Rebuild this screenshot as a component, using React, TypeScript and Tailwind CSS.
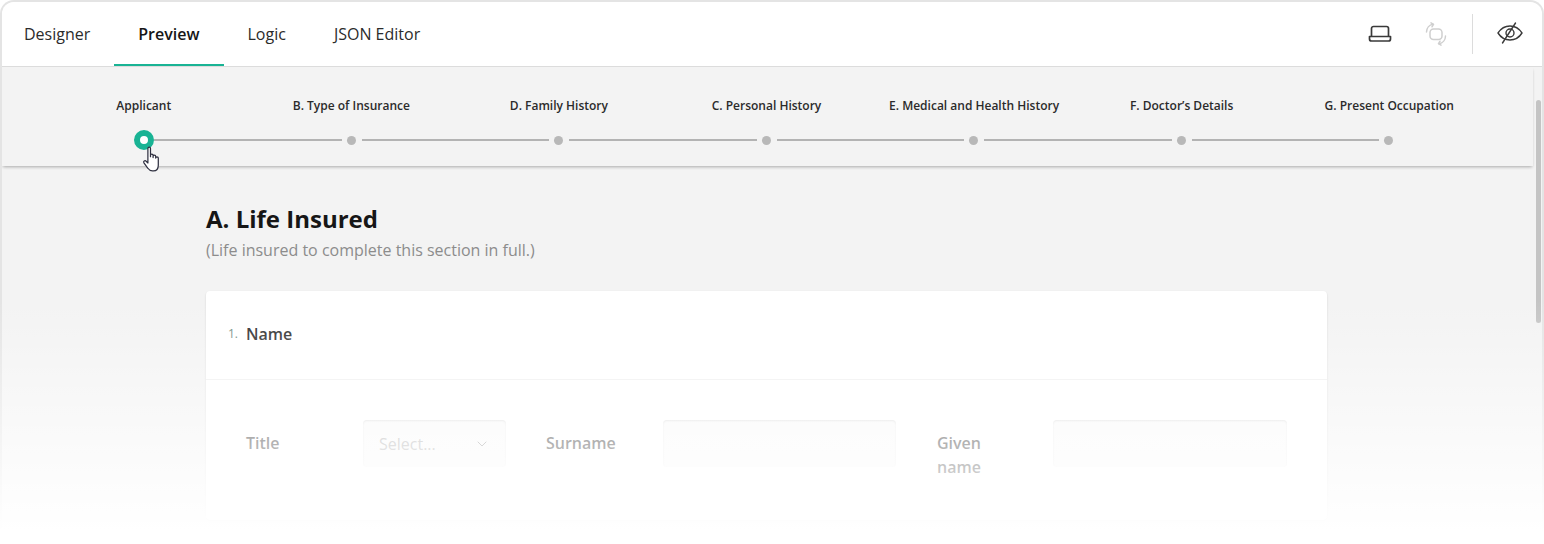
import { ChevronDown } from "lucide-react";

const tabs = ["Designer", "Preview", "Logic", "JSON Editor"];
const steps = [
  "Applicant",
  "B. Type of Insurance",
  "D. Family History",
  "C. Personal History",
  "E. Medical and Health History",
  "F. Doctor’s Details",
  "G. Present Occupation",
];

function LaptopIcon() {
  return (
    <svg width="24" height="24" viewBox="0 0 24 24" fill="none" stroke="#3a3a3a" strokeWidth="1.7" strokeLinejoin="round">
      <path d="M3.500 14.500V6.500A2 2 0 0 1 5.500 4.500h13a2 2 0 0 1 2 2v8" />
      <path d="M1.500 14.500h21V17a2 2 0 0 1-2 2H3.500a2 2 0 0 1-2-2z" />
    </svg>
  );
}

function RotateIcon() {
  return (
    <svg width="24" height="24" viewBox="0 0 24 24" fill="none" stroke="#cfcfcf" strokeWidth="1.5" strokeLinecap="round" strokeLinejoin="round">
      <rect x="6" y="7" width="12" height="10.500" rx="3.500" />
      <path d="M2.500 10A8 8 0 0 1 9 2.200" />
      <path d="M7 .8l2.500 1.500L8 4.800" />
      <path d="M21.500 14A8 8 0 0 1 15 21.800" />
      <path d="M17 23.200l-2.500-1.500L16 19.200" />
    </svg>
  );
}

function EyeOffIcon() {
  return (
    <svg width="26" height="26" viewBox="0 0 26 26" fill="none" stroke="#3a3a3a" strokeWidth="1.4" strokeLinecap="round" strokeLinejoin="round">
      <path d="M1 13c3-4.700 7-7 12-7s9 2.300 12 7c-3 4.700-7 7-12 7S4 17.700 1 13z" />
      <circle cx="13" cy="13" r="4" />
      <path d="M18.500 3L5.500 23" />
    </svg>
  );
}

function HandCursor() {
  return (
    <svg width="18" height="26" viewBox="0 0 15.500 23" fill="#fff" stroke="#2f3040" strokeWidth="1.1" strokeLinejoin="round">
      <path d="M5 2.200c0-1.500 2.300-1.500 2.300 0v7.300V8.200c0-1.400 2.300-1.400 2.300 0v2-1c0-1.400 2.300-1.400 2.300 0v1.500c0-1.300 2.300-1.300 2.300 0v6.300c0 3-1.600 5-4.300 5H9c-2 0-3-.8-4-2.300L1.500 15c-.9-1.400.9-2.700 2-1.500L5 15z" />
    </svg>
  );
}

function Field({
  label,
  labelClassName,
  children,
  className,
}: {
  label: string;
  labelClassName: string;
  children: React.ReactNode;
  className: string;
}) {
  return (
    <div className={`flex ${className}`}>
      <span className={`shrink-0 pt-[11px] pr-[40px] text-base leading-6 font-semibold text-[#383838] ${labelClassName}`}>{label}</span>
      {children}
    </div>
  );
}

export default function App() {
  return (
    <div className="relative h-[544px] w-[1544px] overflow-hidden bg-white font-['Open_Sans',sans-serif]">
      <div className="h-[544px] overflow-hidden rounded-t-[14px] border-2 border-b-0 border-[#e4e4e4] bg-[#f3f3f3]">
        {/* Tabs */}
        <header className="flex h-[65px] items-stretch justify-between border-b border-[#dcdcdc] bg-white">
          <nav className="flex">
            {tabs.map((tab) => (
              <span
                key={tab}
                className={
                  tab === "Preview"
                    ? "flex items-center border-y-2 border-t-transparent border-b-[#19b394] px-6 text-base font-semibold text-[#161616]"
                    : "flex items-center px-6 first:pl-[22px] text-base text-[#2b2b2b]"
                }
              >
                {tab}
              </span>
            ))}
          </nav>
          <div className="flex items-center">
            <LaptopIcon />
            <span className="ml-8">
              <RotateIcon />
            </span>
            <span className="mr-[19px] ml-[24px] h-10 border-l border-[#dcdcdc] pl-[24px]">
              <span className="mt-[6px] block">
                <EyeOffIcon />
              </span>
            </span>
          </div>
        </header>

        {/* Stepper */}
        <section className="mr-[9px] h-[99px] bg-[#f3f3f3] shadow-[0_2px_3px_-1px_rgba(0,0,0,0.3)]">
          <div className="ml-[38px] grid w-[1453px] grid-cols-7 pt-[30px]">
            {steps.map((step) => (
              <span key={step} className="text-center text-xs leading-[18px] font-semibold whitespace-nowrap text-[#2b2b2b]">
                {step}
              </span>
            ))}
          </div>
          <div className="relative mt-[15px] ml-[132px] flex w-[1265px] items-center">
            <span className="h-5 w-5 shrink-0 rounded-full border-[6px] border-[#19b394] bg-white" />
            <span className="absolute top-[16px] left-[8px]">
              <HandCursor />
            </span>
            {steps.slice(1).map((step) => (
              <div key={step} className="flex flex-1 items-center">
                <span className="mr-[5px] h-0.5 flex-1 bg-[#b3b3b3]" />
                <span className="mr-[6px] h-[9px] w-[9px] shrink-0 rounded-full bg-[#b8b8b8]" />
              </div>
            ))}
          </div>
        </section>

        {/* Page */}
        <main className="pt-[37px] pl-[204px]">
          <h1 className="text-2xl leading-8 font-bold text-[#161616]">A. Life Insured</h1>
          <p className="mt-[3px] text-base leading-6 text-[#8c8c8c]">(Life insured to complete this section in full.)</p>

          <div className="mt-[29px] h-[229px] w-[1121px] rounded bg-white shadow-[0_1px_2px_rgba(0,0,0,0.15)]">
            <div className="flex h-[89px] items-center border-b border-[#eeeeee] pb-[2px] pl-[22px]">
              <span className="w-[18px] text-xs text-[#6f8a80]">1.</span>
              <span className="text-base font-semibold text-[#2a2a2a]">Name</span>
            </div>
            <div className="flex gap-10 px-10 pt-10">
              <Field label="Title" labelClassName="w-[117px]" className="w-[260px]">
                <div className="flex h-[47px] flex-1 items-center justify-between rounded bg-[#f9f9f9] px-4 shadow-[inset_0_1px_2px_rgba(0,0,0,0.12)]">
                  <span className="text-base text-[#b0b0b0]">Select...</span>
                  <ChevronDown size={16} strokeWidth={1.5} className="text-[#999]" />
                </div>
              </Field>
              <Field label="Surname" labelClassName="w-[117px]" className="w-[350px]">
                <div className="h-[47px] flex-1 rounded bg-[#f9f9f9] shadow-[inset_0_1px_2px_rgba(0,0,0,0.12)]" />
              </Field>
              <Field label="Given name" labelClassName="w-[116px]" className="ml-px w-[350px]">
                <div className="h-[47px] flex-1 rounded bg-[#f9f9f9] shadow-[inset_0_1px_2px_rgba(0,0,0,0.12)]" />
              </Field>
            </div>
          </div>
        </main>
      </div>

      {/* Scrollbar thumb */}
      <div className="absolute top-[100px] left-[1536px] h-[223px] w-[5px] rounded-full bg-[#c4c4c4]" />

      {/* Fade out */}
      <div className="pointer-events-none absolute inset-x-0 top-[300px] bottom-0 bg-gradient-to-b from-white/0 to-white to-[95%]" />
    </div>
  );
}
